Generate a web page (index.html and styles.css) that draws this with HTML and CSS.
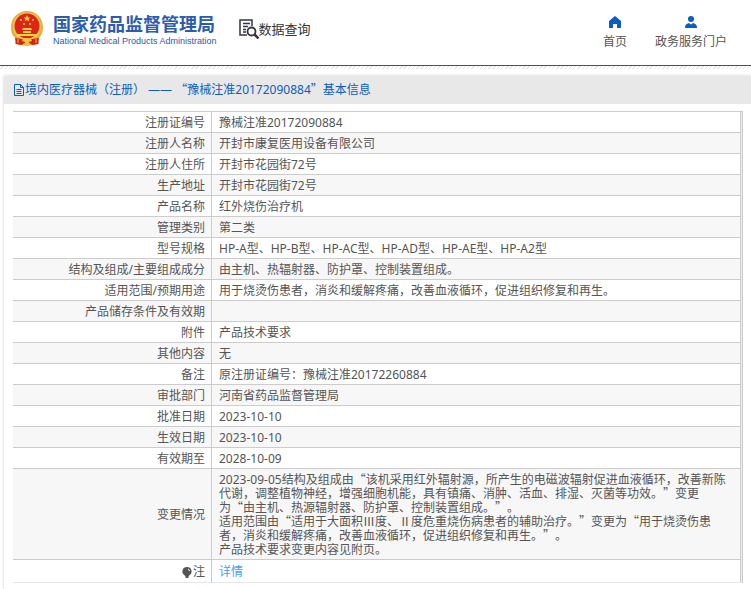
FILE: index.html
```
<!DOCTYPE html>
<html lang="zh-CN">

<head>
    <meta charset="UTF-8">
    <meta name="viewport" content="width=device-width, initial-scale=1.0">
    <title>国家药品监督管理局 数据查询</title>
    <link rel="stylesheet" href="styles.css">
</head>

<body>
    <header class="header">
        <a class="logo" href="#">
            <svg class="emblem" viewBox="0 0 32 35" aria-hidden="true">
                <path fill="#e0b040" d="M16 0C7 0 0 7 0 16c0 6 2 9 5 12l-1 5 6 1 6 1 6-1 6-1-1-5c3-3 5-6 5-12C32 7 25 0 16 0z" />
                <circle cx="16" cy="15.500" r="14" fill="#f2c94a" />
                <circle cx="16" cy="15" r="12.500" fill="#dd2418" />
                <path fill="#f7d43c" d="M16 4l1 2.400h2.500l-2 1.600.8 2.500L16 9l-2.300 1.500.8-2.500-2-1.600H15z" />
                <g fill="#f7d43c">
                    <circle cx="10" cy="9" r="1" />
                    <circle cx="22" cy="9" r="1" />
                    <circle cx="13" cy="13" r="1" />
                    <circle cx="19" cy="13" r="1" />
                    <path d="M11 19l1-2h8l1 2zM12 20h8v2h-8zM6 23h20v2H6z" />
                </g>
                <path fill="#d62219" d="M4 27l7 1h10l7-1-1 6-6 1-2-2h-6l-2 2-6-1z" />
                <path fill="#f2c23a" d="M12 27h8l1 3-3 1v3h-4v-3l-3-1z" />
                <path stroke="#f2c23a" d="M7 28v4M25 28v4" />
            </svg>
            <span class="logo-text">
                <span class="logo-cn">国家药品监督管理局</span>
                <span class="logo-en">National Medical Products Administration</span>
            </span>
        </a>
        <a class="search" href="#">
            <svg class="search-icon" viewBox="0 0 20 20" fill="none" stroke="#33334a" stroke-width="1.500" aria-hidden="true">
                <path d="M8 16H1V1h12v6M4 4.500h7M4 7.500h5M4 10.500h3M4 13h3" />
                <circle cx="12.500" cy="12.500" r="4" stroke-width="1.800" />
                <path stroke-width="2.500" d="M15.500 15.500l4 4" />
            </svg>
            <span>数据查询</span>
        </a>
        <nav class="nav">
            <a href="#">
                <svg viewBox="0 0 12 12" fill="#0a5dc2" aria-hidden="true">
                    <path d="M6 0l6 5v7H8V8H4v4H0V5z" />
                </svg>
                <span>首页</span>
            </a>
            <a href="#">
                <svg viewBox="0 0 12 12" fill="#0a5dc2" aria-hidden="true">
                    <circle cx="6" cy="3" r="3" />
                    <path d="M0 12c0-3 1-4 4-5l2 1.500L8 7c3 1 4 2 4 5z" />
                </svg>
                <span>政务服务门户</span>
            </a>
        </nav>
    </header>
    <div class="stripe"></div>

    <main class="panel">
        <h1 class="panel-title">
            <svg class="doc-icon" viewBox="0 0 12 12" fill="none" stroke="#0a5dc2" aria-hidden="true">
                <path d="M1.500.5h6l3 3v8h-9zM7.500.5v3h3M3.500 5.500h5M3.500 7.500h5M3.500 9.500h5" />
            </svg>
            <span>境内医疗器械（注册） —— <span class="q">“</span>豫械注准20172090884<span class="q">”</span>基本信息</span>
        </h1>
        <div class="panel-body">
            <table class="info">
                <tbody>
                    <tr><th scope="row">注册证编号</th><td>豫械注准20172090884</td></tr>
                    <tr><th scope="row">注册人名称</th><td>开封市康复医用设备有限公司</td></tr>
                    <tr><th scope="row">注册人住所</th><td>开封市花园街72号</td></tr>
                    <tr><th scope="row">生产地址</th><td>开封市花园街72号</td></tr>
                    <tr><th scope="row">产品名称</th><td>红外烧伤治疗机</td></tr>
                    <tr><th scope="row">管理类别</th><td>第二类</td></tr>
                    <tr><th scope="row">型号规格</th><td>HP-A型、HP-B型、HP-AC型、HP-AD型、HP-AE型、HP-A2型</td></tr>
                    <tr><th scope="row">结构及组成/主要组成成分</th><td>由主机、热辐射器、防护罩、控制装置组成。</td></tr>
                    <tr><th scope="row">适用范围/预期用途</th><td>用于烧烫伤患者，消炎和缓解疼痛，改善血液循环，促进组织修复和再生。</td></tr>
                    <tr><th scope="row">产品储存条件及有效期</th><td></td></tr>
                    <tr><th scope="row">附件</th><td>产品技术要求</td></tr>
                    <tr><th scope="row">其他内容</th><td>无</td></tr>
                    <tr><th scope="row">备注</th><td>原注册证编号：豫械注准20172260884</td></tr>
                    <tr><th scope="row">审批部门</th><td>河南省药品监督管理局</td></tr>
                    <tr><th scope="row">批准日期</th><td>2023-10-10</td></tr>
                    <tr><th scope="row">生效日期</th><td>2023-10-10</td></tr>
                    <tr><th scope="row">有效期至</th><td>2028-10-09</td></tr>
                    <tr>
                        <th scope="row">变更情况</th>
                        <td>2023-09-05结构及组成由<span class="q">“</span>该机采用红外辐射源，所产生的电磁波辐射促进血液循环，改善新陈代谢，调整植物神经，增强细胞机能，具有镇痛、消肿、活血、排湿、灭菌等功效。<span class="q">”</span>变更<br>为<span class="q">“</span>由主机、热源辐射器、防护罩、控制装置组成。<span class="q">”</span>。<br>适用范围由<span class="q">“</span>适用于大面积Ⅲ度、Ⅱ度危重烧伤病患者的辅助治疗。<span class="q">”</span>变更为<span class="q">“</span>用于烧烫伤患<br>者，消炎和缓解疼痛，改善血液循环，促进组织修复和再生。<span class="q">”</span>。<br>产品技术要求变更内容见附页。</td>
                    </tr>
                    <tr class="note">
                        <th scope="row">
                            <svg class="bulb" viewBox="0 0 10 12" aria-hidden="true">
                                <path fill="#555" d="M5 0a4.500 4.500 0 0 0-2.500 8.300L3.500 9.500v1.500h3V9.500l1-1.200A4.500 4.500 0 0 0 5 0z" />
                                <path stroke="#fff" fill="none" d="M6 2q1.500.5 1.500 2" />
                            </svg>注
                        </th>
                        <td><a href="#">详情</a></td>
                    </tr>
                </tbody>
            </table>
        </div>
    </main>
</body>

</html>
```
FILE: styles.css
```
* {
    box-sizing: border-box;
}

body {
    margin: 0;
    font-family: "Noto Sans", "Noto Sans CJK SC", sans-serif;
    font-size: 12px;
    color: #555;
    background-color: #fff;
    text-spacing-trim: space-all;
}

a {
    color: inherit;
    text-decoration: none;
}

/* 顶部 */
.header {
    display: flex;
    align-items: flex-start;
    height: 66px;
    padding: 0 24px 0 11px;
    border-bottom: 1px solid #0a5dc2;
}

.stripe {
    height: 3px;
    background: repeating-linear-gradient(135deg, #fff 0 2px, #e6e6e6 2px 3px);
}

.logo {
    display: flex;
    gap: 10px;
    padding-top: 11px;
    color: #2b5cae;
}

.emblem {
    width: 32px;
    height: 35px;
}

.logo-text {
    display: flex;
    flex-direction: column;
    padding-top: 2px;
    white-space: nowrap;
}

.logo-cn {
    font-size: 18px;
    font-weight: bold;
    line-height: 22px;
}

.logo-en {
    font-family: "Liberation Sans", Arial, sans-serif;
    font-size: 9px;
    line-height: 13px;
}

.search {
    display: flex;
    align-items: center;
    margin-left: 22px;
    padding-top: 19px;
    font-size: 13px;
    line-height: 20px;
    color: #333;
}

.search-icon {
    width: 20px;
    height: 20px;
}

.nav {
    display: flex;
    gap: 28px;
    margin-left: auto;
    padding-top: 16px;
}

.nav a {
    display: flex;
    flex-direction: column;
    align-items: center;
    gap: 5px;
    line-height: 18px;
}

.nav svg {
    width: 12px;
    height: 12px;
}

/* 内容 */
.panel {
    margin: 7px 0 0 4px;
    box-shadow: 0 0 3px rgba(0, 0, 0, 0.2);
}

.panel-title {
    display: flex;
    align-items: center;
    margin: 0;
    padding: 0 9px;
    font-size: 12px;
    font-weight: normal;
    line-height: 28px;
    color: #0a5dc2;
    background-color: #e8e8e8;
}

.doc-icon {
    width: 12px;
    height: 12px;
}

.panel-body {
    padding: 7px 8px 6px 9px;
}

/* 全角引号 */
.q {
    font-family: "Noto Sans CJK SC", sans-serif;
    line-height: 0;
}

.info {
    width: 100%;
    border-collapse: separate;
    border-spacing: 0;
    border-top: 1px solid #ccc;
    border-right: 1px solid #ccc;
    padding-right: 1px;
    background-color: #eee;
}

.info th,
.info td {
    height: 21px;
    padding: 4px 7px 2px;
    border-right: 1px solid #ccc;
    border-bottom: 1px solid #ccc;
    font-weight: normal;
    line-height: 14px;
    background-color: #fff;
}

.info th {
    width: 199px;
    padding-right: 6px;
    text-align: right;
}

.info tr:nth-child(even) th,
.info tr:nth-child(even) td {
    background-color: #f7f7f7;
}

.info .note th,
.info .note td {
    height: 23px;
    border-bottom-color: #e6e6ee;
}

.note a {
    color: #409eff;
}

.bulb {
    width: 10px;
    height: 12px;
    margin-right: 1px;
    vertical-align: middle;
}
```
